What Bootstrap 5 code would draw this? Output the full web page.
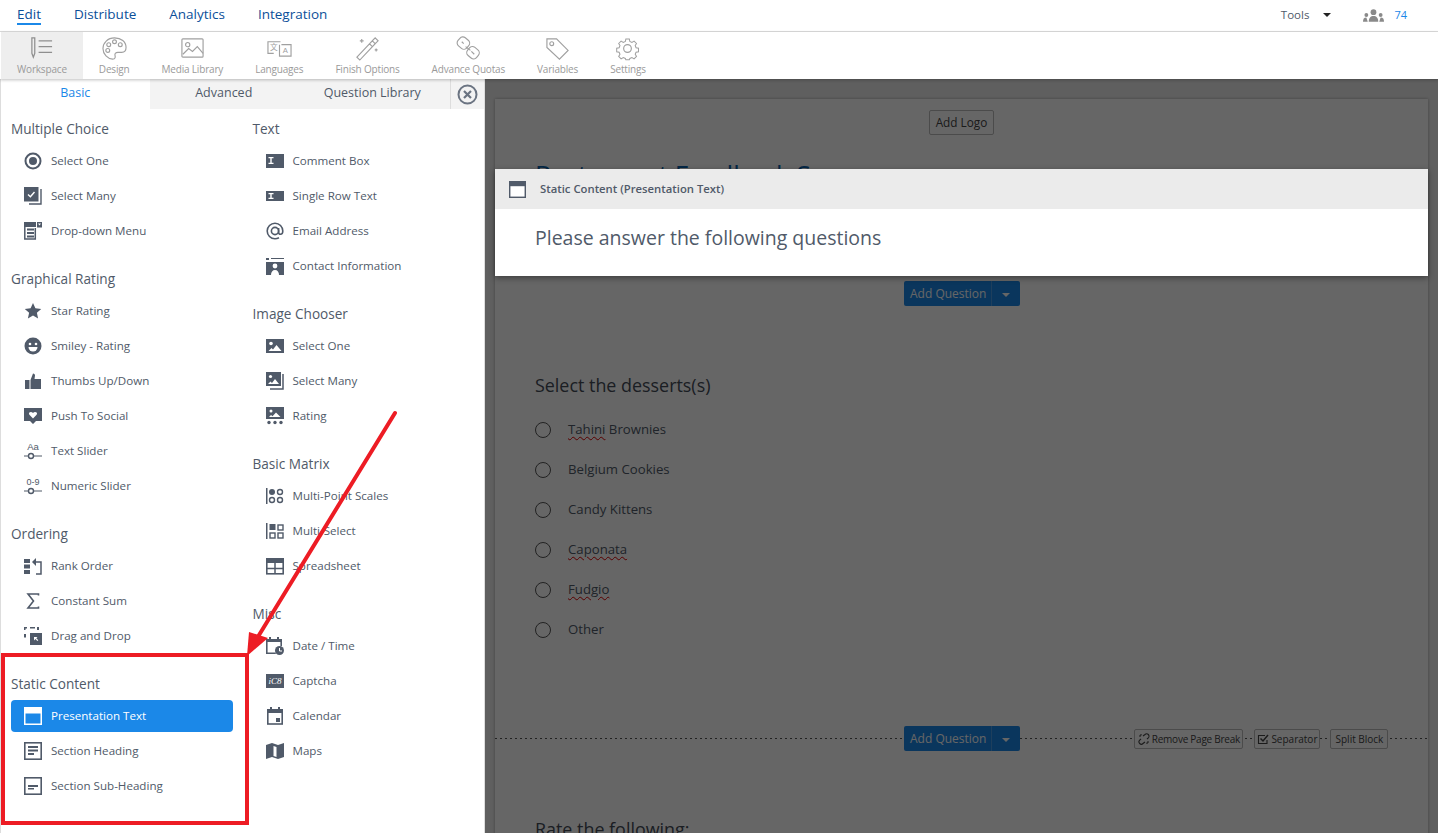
<!DOCTYPE html>
<html lang="en"><head><meta charset="utf-8"><title>Survey editor</title>
<link href="https://cdn.jsdelivr.net/npm/bootstrap@5.3.0/dist/css/bootstrap.min.css" rel="stylesheet">
<style>
html,body{height:100%;overflow:hidden}
body{font-family:"Open Sans","Noto Sans",sans-serif;color:#505a69;font-size:12px;background:#fff;position:relative}
.topbar{height:32px;border-bottom:1px solid #ddd;padding:0 31px 0 17px}
.topbar a.tlink{color:#0b4f99;font-size:13.5px;text-decoration:none;margin-right:33px;line-height:18px;margin-top:-3px;height:18px}
.topbar a.tlink.on{border-bottom:2px solid #1b88e8;height:20px;margin-top:-1px}
.toolsname{font-size:11.5px;margin-top:-2px}
.toolscaret{margin:-1px 32px 0 14px;color:#222}
.topcount{color:#1b88e8;font-size:11px;margin-left:10px}
.toolbar{height:47px;padding-left:1px;position:relative;z-index:3;box-shadow:0 1px 3px rgba(0,0,0,.25);background:#fff}
.tool{padding:4px 16px 0;color:#9a9a9a;font-size:10px;letter-spacing:-.18px;text-decoration:none;white-space:nowrap;height:47px;line-height:14px}
.tool:hover{color:#9a9a9a}
.tool.on{background:#eee}
.tool svg{width:25px;height:25px;display:block;margin-bottom:1px}
.mainarea{height:754px;position:relative;overflow:hidden}
.sidepanel{width:485px;flex:none;border-left:1px solid #ddd;border-right:1px solid #ddd;background:#fff;position:relative;z-index:2}
.tabrow{height:30px;background:#f3f3f3}
.tabcell{width:148.5px;text-align:center;font-size:12.5px;line-height:27px;color:#505a69;text-decoration:none}
.tabcell.on{background:#fff;color:#1b88e8}
.tabclose{margin-left:auto;width:34px;border-left:1px solid #ddd;color:#6b7482}
.qcols{padding:6px 10px 0}
.qcol{width:222px}
.qcol+.qcol{margin-left:20px}
.qgroup{margin-bottom:18px}
.qhead{font-size:13.6px;height:30px;line-height:28px;color:#505a69;font-weight:400;margin:0}
.qitem{height:32px;margin-bottom:3px;padding:0 0 0 13px;color:#505a69;font-size:11.6px;border-radius:4px;text-decoration:none}
.qitem:hover{color:#505a69}
.qitem svg{width:18px;height:18px;flex:none;margin-right:9px}
.qitem.on,.qitem.on:hover{background:#1b88e8;color:#fff}
.canvasarea{flex:1;background:#eee;position:relative;padding:20px 10px 0 10px;min-width:0}
.dimmer{position:absolute;inset:0;background:rgba(0,0,0,.6);z-index:1}
.sheet{background:#fff;height:900px;padding-top:11px;box-shadow:0 0 3px rgba(0,0,0,.3);position:relative}
.addlogo{border:1px solid #bbb;font-size:11.8px;padding:0;width:65px;line-height:23px;height:25px;border-radius:2px;background:#fff;color:#444}
.surveytitle{color:#0b62ad;font-size:26px;margin:22px 0 0 40px;line-height:34px;height:34px;font-weight:400;white-space:nowrap}
.hilite{position:absolute;left:10px;right:10px;top:90px;height:107px;z-index:2;background:#fff;box-shadow:0 2px 6px rgba(0,0,0,.4)}
.hilitebar{height:40px;background:#ebebeb;padding-left:14px;font-size:11.3px;font-weight:600}
.hilitebar svg{width:17px;height:17px;margin-right:14px}
.hilitetext{font-size:19.5px;padding:15px 0 0 40px;color:#505a69;line-height:28px}
.addrowa{margin:90px 0 0 409px}
.addgroup .btn{background:#1b88e8;border:0;color:#fff;font-size:12px;height:25px;padding:0 6px;border-radius:2px;line-height:25px}
.addgroup .btn.cap{width:29px;flex:none;border-left:1px solid #4d9fe8;padding:0}
.caretdn{display:inline-block;border-left:4px solid transparent;border-right:4px solid transparent;border-top:4px solid currentColor;vertical-align:middle}
.qtitle{font-size:17.9px;margin:67px 0 0 40px;line-height:24px;font-weight:400;color:#444c58}
.optlist{margin:13px 0 0 40px;padding:0;list-style:none}
.optlist li{height:40px;font-size:13.2px;color:#505a69}
.optradio{width:16px;height:16px;border:1.5px solid #555;border-radius:50%;margin-right:17px;flex:none}
.squig{text-decoration:underline wavy #d00;text-decoration-thickness:1px;text-underline-offset:2px}
.breakrow{margin-top:76px;height:25px;padding-left:409px;background-image:linear-gradient(to right,#555 50%,transparent 50%);background-size:5px 1px;background-repeat:repeat-x;background-position:0 12px}
.breakbtn{border:1px solid #bbb;background:#fff;font-size:10px;height:20px;line-height:18px;padding:0;border-radius:2px;color:#444;white-space:nowrap}
.breakbtn svg{width:12px;height:12px;margin-right:2px;vertical-align:-2px}
.bk-a{width:109px;margin-left:114px;letter-spacing:-.25px}
.bk-b{width:66px;margin-left:11px}
.bk-c{width:58px;margin-left:10px}
.ratetitle{margin:66px 0 0 40px;font-size:17.9px;line-height:24px;color:#444c58}
.notes{position:absolute;left:0;top:0;width:1438px;height:833px;z-index:5;pointer-events:none}
</style></head><body>
<svg width="0" height="0" class="position-absolute">
<defs>
<symbol id="i-radio" viewBox="0 0 18 18"><circle cx="9" cy="9" r="7.500" fill="none" stroke="currentColor" stroke-width="2"/><circle cx="9" cy="9" r="4" fill="currentColor"/></symbol>
<symbol id="i-many" viewBox="0 0 18 18"><path fill="currentColor" d="M0 0h14.500v14.500H0z"/><path fill="none" stroke="#fff" stroke-width="1.400" d="M4 7.500l2.400 2.200L10.500 5"/><path fill="none" stroke="currentColor" stroke-width="1.400" d="M17 2v15H5"/></symbol>
<symbol id="i-drop" viewBox="0 0 18 18"><path fill="none" stroke="currentColor" stroke-width="1.500" d="M.8 1v16h10.500V6"/><path fill="currentColor" d="M0 0h12v5H0zM13 0h5v5.500h-5zM3 6.500h7v2H3zM3 10h7v2H3zM3 13.500h7v2H3z"/><path fill="#fff" d="M14 1.500h3l-1.500 2z"/></symbol>
<symbol id="i-star" viewBox="0 0 18 18"><path fill="currentColor" d="M9 1l2.400 5.300 5.800.6-4.300 3.900 1.200 5.700L9 13.600l-5.100 2.900 1.200-5.700L.8 6.900l5.800-.6z"/></symbol>
<symbol id="i-smile" viewBox="0 0 18 18"><circle cx="9" cy="9" r="8.500" fill="currentColor"/><circle cx="6" cy="7" r="1.300" fill="#fff"/><circle cx="12" cy="7" r="1.300" fill="#fff"/><path fill="#fff" d="M4.500 10h9a4.500 4.500 0 0 1-9 0z"/></symbol>
<symbol id="i-thumb" viewBox="0 0 18 18"><path fill="currentColor" d="M1 8h4.500v9H1zM6.500 8l2.500-6.500c1.500 0 2 1 2 2L10.500 7H17v10H6.500z"/></symbol>
<symbol id="i-heart" viewBox="0 0 18 18"><path fill="currentColor" d="M0 1h18v13h-6l-3 3-3-3H0z"/><path fill="#fff" d="M9 11.500L5.400 7.800c-1.700-2 1.600-4 3.600-1.800 2-2.200 5.300-.2 3.600 1.800z"/></symbol>
<symbol id="i-tslide" viewBox="0 0 18 18"><text x="9" y="8" text-anchor="middle" font-size="9.500" font-family="Liberation Sans" fill="currentColor">Aa</text><path stroke="currentColor" stroke-width="1.200" d="M0 14h4.500M9.500 14H18"/><circle cx="7" cy="14" r="2.500" fill="none" stroke="currentColor" stroke-width="1.400"/></symbol>
<symbol id="i-nslide" viewBox="0 0 18 18"><text x="9" y="8" text-anchor="middle" font-size="9" font-family="Liberation Sans" fill="currentColor">0-9</text><path stroke="currentColor" stroke-width="1.200" d="M0 14h4.500M9.500 14H18"/><circle cx="7" cy="14" r="2.500" fill="none" stroke="currentColor" stroke-width="1.400"/></symbol>
<symbol id="i-rank" viewBox="0 0 18 18"><path fill="currentColor" d="M0 2h6v4H0zM0 7.500h6v4H0zM0 13h6v4H0z"/><path fill="none" stroke="currentColor" stroke-width="1.500" d="M11 5h6v12h-5"/><path fill="currentColor" d="M12 1v8L8 5z"/></symbol>
<symbol id="i-sum" viewBox="0 0 18 18"><path fill="none" stroke="currentColor" stroke-width="1.600" d="M14.500 3.500V2H4l5.500 7L4 16h10.500v-1.500"/></symbol>
<symbol id="i-drag" viewBox="0 0 18 18"><path fill="currentColor" d="M0 0h3v1.500H1.500V3H0zM6 0h5v1.500H6zM0 7h2v3.500H0z"/><path fill="currentColor" d="M13 0h2v3h-2z"/><path fill="currentColor" d="M6 6h12v12H6z"/><path fill="#fff" d="M10 10h3.500l-1.200 1.200 2 2-.9.900-2-2L10 13.400z"/></symbol>
<symbol id="i-win" viewBox="0 0 18 18"><path fill="currentColor" d="M0 0h18v18H0z"/><path fill="#fff" d="M1.500 5.500h15v11h-15z"/></symbol>
<symbol id="i-winon" viewBox="0 0 18 18"><path fill="#fff" d="M0 0h18v18H0z"/><path fill="#1b88e8" d="M1.500 6.500h15v10h-15z"/></symbol>
<symbol id="i-head" viewBox="0 0 18 18"><rect x=".8" y=".8" width="16.400" height="16.400" fill="none" stroke="currentColor" stroke-width="1.600"/><path fill="currentColor" d="M4 4h10v2H4zM4 7.500h10v2H4zM4 11h6v2H4z"/></symbol>
<symbol id="i-sub" viewBox="0 0 18 18"><rect x=".8" y=".8" width="16.400" height="16.400" fill="none" stroke="currentColor" stroke-width="1.600"/><path fill="currentColor" d="M4 8h10v2H4zM4 11h6v1.500H4z"/></symbol>
<symbol id="i-comment" viewBox="0 0 18 18"><path fill="currentColor" d="M0 2h18v14H0z"/><path fill="#fff" d="M2.500 5h5v1.200H5.700v4.600h1.800V12h-5v-1.200h1.800V6.200H2.500z"/></symbol>
<symbol id="i-single" viewBox="0 0 18 18"><path fill="currentColor" d="M0 4h18v10H0z"/><path fill="#fff" d="M2.500 6h5v1.200H5.700v3.600h1.800V12h-5v-1.200h1.800V7.200H2.500z"/></symbol>
<symbol id="i-at" viewBox="0 0 18 18"><path fill="none" stroke="currentColor" stroke-width="1.600" d="M13 15.800c-1.200.6-2.600 1-4 1A7.800 7.800 0 1 1 16.800 9c0 2-1 3.300-2.300 3.300-1.200 0-1.900-.8-1.900-2V6"/><circle cx="9" cy="9" r="3.600" fill="none" stroke="currentColor" stroke-width="1.600"/></symbol>
<symbol id="i-contact" viewBox="0 0 18 18"><path fill="currentColor" d="M0 1h3v2H0zM5 1h13v1H5zM0 5h18v13H0z"/><circle cx="9" cy="9" r="2.400" fill="#fff"/><path fill="#fff" d="M5 18c0-3 1.500-5 4-5s4 2 4 5z"/></symbol>
<symbol id="i-img" viewBox="0 0 18 18"><path fill="currentColor" d="M0 2h18v14H0z"/><circle cx="5" cy="6.500" r="1.800" fill="#fff"/><path fill="#fff" d="M2.500 14l3-3 1.500 1.500 3.500-4.500 5 6z"/></symbol>
<symbol id="i-imgs" viewBox="0 0 18 18"><path fill="currentColor" d="M0 0h15v14H0z"/><circle cx="4.500" cy="4.500" r="1.600" fill="#fff"/><path fill="#fff" d="M2 12l2.500-2.500L6 11l3-4 4 5z"/><path fill="none" stroke="currentColor" stroke-width="1.500" d="M17 2v15H4"/></symbol>
<symbol id="i-imgr" viewBox="0 0 18 18"><path fill="currentColor" d="M0 0h18v12H0z"/><circle cx="5" cy="4" r="1.500" fill="#fff"/><path fill="#fff" d="M3 10l2-2 1.500 1.200L10 5.500l4.500 4.500z"/><g fill="currentColor"><circle cx="3" cy="15.500" r="1.700"/><circle cx="9" cy="15.500" r="1.700"/><circle cx="15" cy="15.500" r="1.700"/></g></symbol>
<symbol id="i-mp" viewBox="0 0 18 18"><path fill="currentColor" d="M0 1h1.500v16H0z"/><circle cx="6" cy="5" r="3" fill="currentColor"/><g fill="none" stroke="currentColor" stroke-width="1.400"><circle cx="14" cy="5" r="2.500"/><circle cx="6" cy="13" r="2.500"/><circle cx="14" cy="13" r="2.500"/></g></symbol>
<symbol id="i-ms" viewBox="0 0 18 18"><path fill="currentColor" d="M0 1h1.500v16H0zM3.500 2h6v6h-6z"/><g fill="none" stroke="currentColor" stroke-width="1.400"><rect x="12" y="3" width="5" height="5"/><rect x="4" y="11" width="5" height="5"/><rect x="12" y="11" width="5" height="5"/></g></symbol>
<symbol id="i-sheet" viewBox="0 0 18 18"><path fill="currentColor" d="M0 1h18v5H0z"/><rect x=".8" y="1.800" width="16.400" height="15" fill="none" stroke="currentColor" stroke-width="1.600"/><path stroke="currentColor" stroke-width="1.500" d="M0 11.500h18M9 6v11"/></symbol>
<symbol id="i-date" viewBox="0 0 18 18"><path fill="currentColor" d="M3 0h2v3H3zM11 0h2v3h-2zM0 2h16v3H0z"/><path fill="none" stroke="currentColor" stroke-width="1.600" d="M.8 4v12.200h9M15.200 4v5"/><circle cx="13.500" cy="13.500" r="4.500" fill="currentColor"/><path fill="none" stroke="#fff" d="M13.500 11v3h2.500"/></symbol>
<symbol id="i-cap" viewBox="0 0 18 18"><path fill="currentColor" d="M0 2h18v14H0z"/><text x="9" y="12" text-anchor="middle" font-family="Liberation Serif" font-style="italic" font-size="9" fill="#fff">iC8</text></symbol>
<symbol id="i-cal" viewBox="0 0 18 18"><path fill="currentColor" d="M4 0h2v3H4zM12 0h2v3h-2zM1 2h16v4H1zM10 11h4v4h-4z"/><rect x="1.800" y="3" width="14.400" height="14" fill="none" stroke="currentColor" stroke-width="1.600"/></symbol>
<symbol id="i-map" viewBox="0 0 18 18"><path fill="currentColor" d="M0 3l6-2 6 2 6-2v14l-6 2-6-2-6 2zM7.500 4v10l3 1V5z"/></symbol>
</defs></svg>

<nav class="topbar d-flex align-items-center">
  <a class="tlink on" href="#">Edit</a><a class="tlink" href="#">Distribute</a><a class="tlink" href="#">Analytics</a><a class="tlink" href="#">Integration</a>
  <div class="ms-auto d-flex align-items-center">
    <span class="toolsname">Tools</span><span class="caretdn toolscaret"></span>
    <svg width="21" height="13" viewBox="0 0 22 13"><g fill="#8a8a8a"><circle cx="11" cy="3" r="3"/><path d="M6 13c0-4 2-6 5-6s5 2 5 6z"/><circle cx="3.500" cy="6" r="2"/><path d="M0 13c0-3 1-4.500 3.500-4.500L5 13z"/><circle cx="18.500" cy="6" r="2"/><path d="M22 13c0-3-1-4.500-3.500-4.500L17 13z"/></g></svg>
    <span class="topcount">74</span>
  </div>
</nav>

<div class="toolbar d-flex">
  <a href="#" class="tool on d-flex flex-column align-items-center"><svg viewBox="0 0 26 26" fill="none" stroke="#8f8f8f" stroke-width="1.300"><path d="M3 2h3v16l-1.500 4L3 18zM10 5h14M10 11h14M10 17h14"/></svg>Workspace</a>
  <a href="#" class="tool d-flex flex-column align-items-center"><svg viewBox="0 0 26 26" fill="none" stroke="#a0a0a0" stroke-width="1.200"><path d="M13 2C6 2 1 7 1 13s5 11 10 11c3 0 3-2 2.500-4-.5-2 1-3 3-3h4c2.500 0 4.500-2 4.500-5C25 6 20 2 13 2z"/><circle cx="7" cy="9" r="2"/><circle cx="13" cy="6" r="2"/><circle cx="19" cy="9" r="2"/><circle cx="6" cy="15" r="2"/></svg>Design</a>
  <a href="#" class="tool d-flex flex-column align-items-center"><svg viewBox="0 0 26 26" fill="none" stroke="#a0a0a0" stroke-width="1.200"><rect x="2" y="3" width="22" height="19" rx="1"/><circle cx="8" cy="9" r="2.200"/><path d="M3 19l6-6 4 3 5-5 6 7"/></svg>Media Library</a>
  <a href="#" class="tool d-flex flex-column align-items-center"><svg viewBox="0 0 26 26" fill="none" stroke="#a0a0a0" stroke-width="1.200"><path d="M14 6H1v12h6M15 9h10v12H13V9"/><text x="7" y="15" text-anchor="middle" font-size="8" fill="#a0a0a0" stroke="none" font-family="Noto Sans CJK SC">文</text><text x="19" y="18" text-anchor="middle" font-size="8" fill="#a0a0a0" stroke="none" font-family="Liberation Sans">A</text></svg>Languages</a>
  <a href="#" class="tool d-flex flex-column align-items-center"><svg viewBox="0 0 26 26" fill="none" stroke="#a0a0a0" stroke-width="1.200"><path d="M2 22l16-17 3 3L5 25zM15 8l3 3M21 2l3 3-3 3-3-3zM7 3v4M5 5h4M22 13v3M20.500 14.500h3"/></svg>Finish Options</a>
  <a href="#" class="tool d-flex flex-column align-items-center"><svg viewBox="0 0 26 26" fill="none" stroke="#a0a0a0" stroke-width="1.200"><rect x="2" y="2" width="12" height="11" rx="4" transform="rotate(40 8 7)"/><rect x="12" y="12" width="12" height="11" rx="4" transform="rotate(40 18 17)"/><path d="M6 6l2 2M16 16l3 3M10 11l5 4"/></svg>Advance Quotas</a>
  <a href="#" class="tool d-flex flex-column align-items-center"><svg viewBox="0 0 26 26" fill="none" stroke="#a0a0a0" stroke-width="1.200"><path d="M2 3h10l12 12-9 9L2 12z"/><circle cx="7" cy="8" r="2"/></svg>Variables</a>
  <a href="#" class="tool d-flex flex-column align-items-center"><svg viewBox="0 0 26 26" fill="none" stroke="#a0a0a0" stroke-width="1.200"><circle cx="13" cy="13" r="4"/><path d="M11 2h4l.6 2.800 2.400 1 2.500-1.500 2.800 2.800-1.500 2.400 1 2.500 2.800.6v4l-2.800.6-1 2.400 1.500 2.500-2.800 2.800-2.500-1.500-2.400 1-.6 1.600h-4l-.6-1.600-2.400-1-2.500 1.500-2.800-2.800 1.500-2.500-1-2.400-2.800-.6v-4l2.800-.6 1-2.500-1.500-2.400 2.800-2.800 2.500 1.500 2.400-1z" transform="translate(1.400 1.400) scale(.9)"/></svg>Settings</a>
</div>

<div class="mainarea d-flex">
  <aside class="sidepanel">
    <div class="tabrow d-flex">
      <a href="#" class="tabcell on">Basic</a><a href="#" class="tabcell">Advanced</a><a href="#" class="tabcell">Question Library</a>
      <div class="tabclose d-flex align-items-center justify-content-center"><svg width="21" height="21" viewBox="0 0 21 21"><circle cx="10.500" cy="10.500" r="9" fill="none" stroke="currentColor" stroke-width="2"/><path d="M7 7l7 7M14 7l-7 7" stroke="currentColor" stroke-width="2.200"/></svg></div>
    </div>
    <div class="qcols d-flex">
      <div class="qcol">
        <section class="qgroup"><h2 class="qhead">Multiple Choice</h2>
          <a href="#" class="qitem d-flex align-items-center"><svg><use href="#i-radio"/></svg>Select One</a>
          <a href="#" class="qitem d-flex align-items-center"><svg><use href="#i-many"/></svg>Select Many</a>
          <a href="#" class="qitem d-flex align-items-center"><svg><use href="#i-drop"/></svg>Drop-down Menu</a></section>
        <section class="qgroup"><h2 class="qhead">Graphical Rating</h2>
          <a href="#" class="qitem d-flex align-items-center"><svg><use href="#i-star"/></svg>Star Rating</a>
          <a href="#" class="qitem d-flex align-items-center"><svg><use href="#i-smile"/></svg>Smiley - Rating</a>
          <a href="#" class="qitem d-flex align-items-center"><svg><use href="#i-thumb"/></svg>Thumbs Up/Down</a>
          <a href="#" class="qitem d-flex align-items-center"><svg><use href="#i-heart"/></svg>Push To Social</a>
          <a href="#" class="qitem d-flex align-items-center"><svg><use href="#i-tslide"/></svg>Text Slider</a>
          <a href="#" class="qitem d-flex align-items-center"><svg><use href="#i-nslide"/></svg>Numeric Slider</a></section>
        <section class="qgroup"><h2 class="qhead">Ordering</h2>
          <a href="#" class="qitem d-flex align-items-center"><svg><use href="#i-rank"/></svg>Rank Order</a>
          <a href="#" class="qitem d-flex align-items-center"><svg><use href="#i-sum"/></svg>Constant Sum</a>
          <a href="#" class="qitem d-flex align-items-center"><svg><use href="#i-drag"/></svg>Drag and Drop</a></section>
        <section class="qgroup"><h2 class="qhead">Static Content</h2>
          <a href="#" class="qitem on d-flex align-items-center"><svg><use href="#i-winon"/></svg>Presentation Text</a>
          <a href="#" class="qitem d-flex align-items-center"><svg><use href="#i-head"/></svg>Section Heading</a>
          <a href="#" class="qitem d-flex align-items-center"><svg><use href="#i-sub"/></svg>Section Sub-Heading</a></section>
      </div>
      <div class="qcol">
        <section class="qgroup"><h2 class="qhead">Text</h2>
          <a href="#" class="qitem d-flex align-items-center"><svg><use href="#i-comment"/></svg>Comment Box</a>
          <a href="#" class="qitem d-flex align-items-center"><svg><use href="#i-single"/></svg>Single Row Text</a>
          <a href="#" class="qitem d-flex align-items-center"><svg><use href="#i-at"/></svg>Email Address</a>
          <a href="#" class="qitem d-flex align-items-center"><svg><use href="#i-contact"/></svg>Contact Information</a></section>
        <section class="qgroup"><h2 class="qhead">Image Chooser</h2>
          <a href="#" class="qitem d-flex align-items-center"><svg><use href="#i-img"/></svg>Select One</a>
          <a href="#" class="qitem d-flex align-items-center"><svg><use href="#i-imgs"/></svg>Select Many</a>
          <a href="#" class="qitem d-flex align-items-center"><svg><use href="#i-imgr"/></svg>Rating</a></section>
        <section class="qgroup"><h2 class="qhead">Basic Matrix</h2>
          <a href="#" class="qitem d-flex align-items-center"><svg><use href="#i-mp"/></svg>Multi-Point Scales</a>
          <a href="#" class="qitem d-flex align-items-center"><svg><use href="#i-ms"/></svg>Multi-Select</a>
          <a href="#" class="qitem d-flex align-items-center"><svg><use href="#i-sheet"/></svg>Spreadsheet</a></section>
        <section class="qgroup"><h2 class="qhead">Misc</h2>
          <a href="#" class="qitem d-flex align-items-center"><svg><use href="#i-date"/></svg>Date / Time</a>
          <a href="#" class="qitem d-flex align-items-center"><svg><use href="#i-cap"/></svg>Captcha</a>
          <a href="#" class="qitem d-flex align-items-center"><svg><use href="#i-cal"/></svg>Calendar</a>
          <a href="#" class="qitem d-flex align-items-center"><svg><use href="#i-map"/></svg>Maps</a></section>
      </div>
    </div>
  </aside>
  <main class="canvasarea">
    <div class="sheet">
      <div class="text-center"><button class="addlogo" type="button">Add Logo</button></div>
      <h1 class="surveytitle">Restaurant Feedback Survey</h1>
      <div class="addrowa"><div class="btn-group addgroup"><button class="btn" type="button">Add Question</button><button class="btn cap" type="button"><span class="caretdn"></span></button></div></div>
      <h3 class="qtitle">Select the desserts(s)</h3>
      <ul class="optlist">
        <li class="d-flex align-items-center"><span class="optradio"></span><span><span class="squig">Tahini</span> Brownies</span></li>
        <li class="d-flex align-items-center"><span class="optradio"></span>Belgium Cookies</li>
        <li class="d-flex align-items-center"><span class="optradio"></span>Candy Kittens</li>
        <li class="d-flex align-items-center"><span class="optradio"></span><span class="squig">Caponata</span></li>
        <li class="d-flex align-items-center"><span class="optradio"></span><span class="squig">Fudgio</span></li>
        <li class="d-flex align-items-center"><span class="optradio"></span>Other</li>
      </ul>
      <div class="breakrow d-flex align-items-center">
        <div class="btn-group addgroup flex-none"><button class="btn" type="button">Add Question</button><button class="btn cap" type="button"><span class="caretdn"></span></button></div>
        <button class="breakbtn bk-a" type="button"><svg viewBox="0 0 12 12" fill="none" stroke="#444" stroke-width="1.100"><path d="M5 3L7 1.500a2.300 2.300 0 0 1 3.300 3.300L9 6M7 9L5 10.500a2.300 2.300 0 0 1-3.300-3.300L3 6M1 3h2M3 1v1.500M11 9H9M9 11V9.500"/></svg>Remove Page Break</button>
        <button class="breakbtn bk-b" type="button"><svg viewBox="0 0 12 12" fill="none" stroke="#444" stroke-width="1.100"><path d="M10 7v3.500H1.500v-8H8"/><path d="M3.500 5.500L6 8l5-6" stroke-width="1.500"/></svg>Separator</button>
        <button class="breakbtn bk-c" type="button">Split Block</button>
      </div>
      <div class="ratetitle">Rate the following:</div>
    </div>
    <div class="dimmer"></div>
    <div class="hilite">
      <div class="hilitebar d-flex align-items-center"><svg><use href="#i-win"/></svg>Static Content (Presentation Text)</div>
      <div class="hilitetext">Please answer the following questions</div>
    </div>
  </main>
</div>

<svg class="notes" viewBox="0 0 1438 833">
  <rect x="3" y="655" width="244" height="168" fill="none" stroke="#ed1c24" stroke-width="4"/>
  <path d="M395 413L256 640" stroke="#ed1c24" stroke-width="4" stroke-linecap="round" fill="none"/>
  <path d="M247 656l2-24 19 6z" fill="#ed1c24"/>
</svg>
</body></html>
